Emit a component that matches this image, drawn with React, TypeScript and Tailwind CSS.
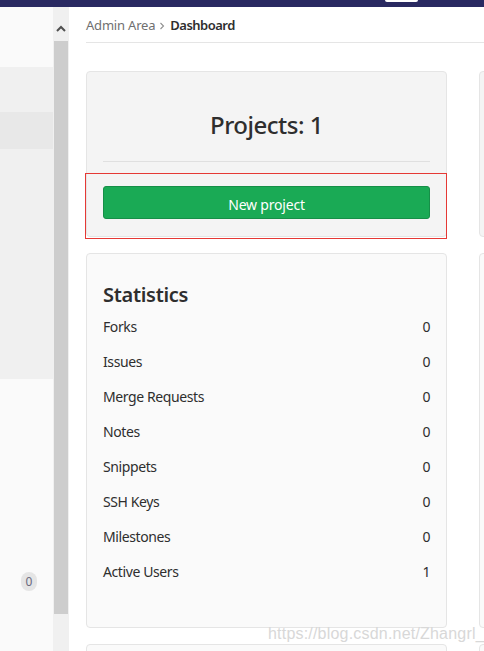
import React from "react";

const stats: [string, string][] = [
  ["Forks", "0"],
  ["Issues", "0"],
  ["Merge Requests", "0"],
  ["Notes", "0"],
  ["Snippets", "0"],
  ["SSH Keys", "0"],
  ["Milestones", "0"],
  ["Active Users", "1"],
];

export default function App() {
  return (
    <div
      className="w-[484px] h-[651px] overflow-hidden bg-white text-[#2e2e2e] flex flex-col"
      style={{ fontFamily: '"Noto Sans", "Open Sans", sans-serif' }}
    >
      {/* top bar */}
      <div className="h-[7px] bg-[#292961] relative shrink-0">
        <div className="absolute left-[385px] top-0 w-[33px] h-[2px] bg-white rounded-b-[2px]" />
      </div>
      <div className="flex flex-1 min-h-0">
        {/* sidebar */}
        <div className="w-[53px] flex flex-col shrink-0">
          <div className="h-[60px] bg-[#fafafa]" />
          <div className="h-[45px] bg-[#f0f0f0]" />
          <div className="h-[37px] bg-[#e8e8e8]" />
          <div className="h-[230px] bg-[#f0f0f0]" />
          <div className="flex-1 bg-[#fafafa] relative">
            <div className="absolute left-[21px] top-[193px] w-[16px] h-[19px] rounded-full bg-[#e5e5e5] flex items-center justify-center text-[12px] text-[#6a6a80] leading-none">
              0
            </div>
          </div>
        </div>
        {/* scrollbar */}
        <div className="w-[16px] bg-[#f0f0f0] flex flex-col items-center shrink-0">
          <div className="h-[34px] w-full flex items-center justify-center pt-[9px]">
            <svg width="10" height="7" viewBox="0 0 10 7">
              <path d="M1 6 L5 2 L9 6" fill="none" stroke="#505050" strokeWidth="2" />
            </svg>
          </div>
          <div className="w-[14px] h-[573px] bg-[#cdcdcd]" />
        </div>
        {/* main */}
        <div className="flex-1 pl-[17px] min-w-0">
          <div className="h-[36px] border-b border-[#e5e5e5] flex items-center text-[13px] pt-[3px] tracking-[-0.2px]">
            <span className="text-[#707070]">Admin Area</span>
            <svg width="6" height="8" viewBox="0 0 6 8" className="ml-[4px] mr-[5px]">
              <path d="M1.5 1 L4.5 4 L1.5 7" fill="none" stroke="#909090" strokeWidth="1.1" />
            </svg>
            <span className="font-semibold text-[#2e2e2e] tracking-[-0.5px]">Dashboard</span>
          </div>
          <div className="flex gap-[32px] mt-[28px]">
            <div className="w-[361px] shrink-0 flex flex-col gap-[16px]">
              {/* projects card */}
              <div className="relative h-[166px] bg-[#f4f4f4] border border-[#e5e5e5] rounded-[4px] px-[16px] pt-[37px]">
                <div className="h-[32px] flex items-center justify-center text-[24px] font-medium leading-none tracking-[-0.5px]">
                  Projects: 1
                </div>
                <div className="mt-[20px] h-px bg-[#e0e0e0]" />
                <button className="mt-[24px] w-full h-[33px] bg-[#1aaa55] border border-[#168f48] rounded-[3px] text-white text-[14px] flex items-center justify-center pt-[3px] tracking-[-0.2px]">
                  New project
                </button>
                <div className="absolute left-[-2px] top-[101px] w-[362px] h-[66px] border border-[#e53935]" />
              </div>
              {/* statistics card */}
              <div className="h-[375px] bg-[#fafafa] border border-[#e5e5e5] rounded-[4px] px-[16px] pt-[29px]">
                <div className="h-[24px] flex items-center text-[20px] font-semibold leading-none tracking-[-0.3px]">
                  Statistics
                </div>
                <div className="mt-[2px] flex flex-col">
                  {stats.map(([k, v]) => (
                    <div key={k} className="h-[35px] flex items-center justify-between text-[14px] tracking-[-0.4px]">
                      <span>{k}</span>
                      <span>{v}</span>
                    </div>
                  ))}
                </div>
              </div>
              <div className="h-[40px] bg-[#fafafa] border border-[#e5e5e5] rounded-[4px]" />
            </div>
            <div className="w-[361px] shrink-0 flex flex-col gap-[16px]">
              <div className="h-[166px] bg-[#f4f4f4] border border-[#e5e5e5] rounded-[4px]" />
              <div className="h-[375px] bg-[#fafafa] border border-[#e5e5e5] rounded-[4px]" />
              <div className="h-[40px] bg-[#fafafa] border border-[#e5e5e5] rounded-[4px]" />
            </div>
          </div>
        </div>
      </div>
      {/* watermark */}
      <div
        className="absolute left-[268px] top-[622px] text-[16px] text-[#d8d8d8] tracking-[0.2px]"
        style={{ fontFamily: '"Liberation Sans", Arial, sans-serif' }}
      >
        https://blog.csdn.net/Zhangrl_
      </div>
    </div>
  );
}
